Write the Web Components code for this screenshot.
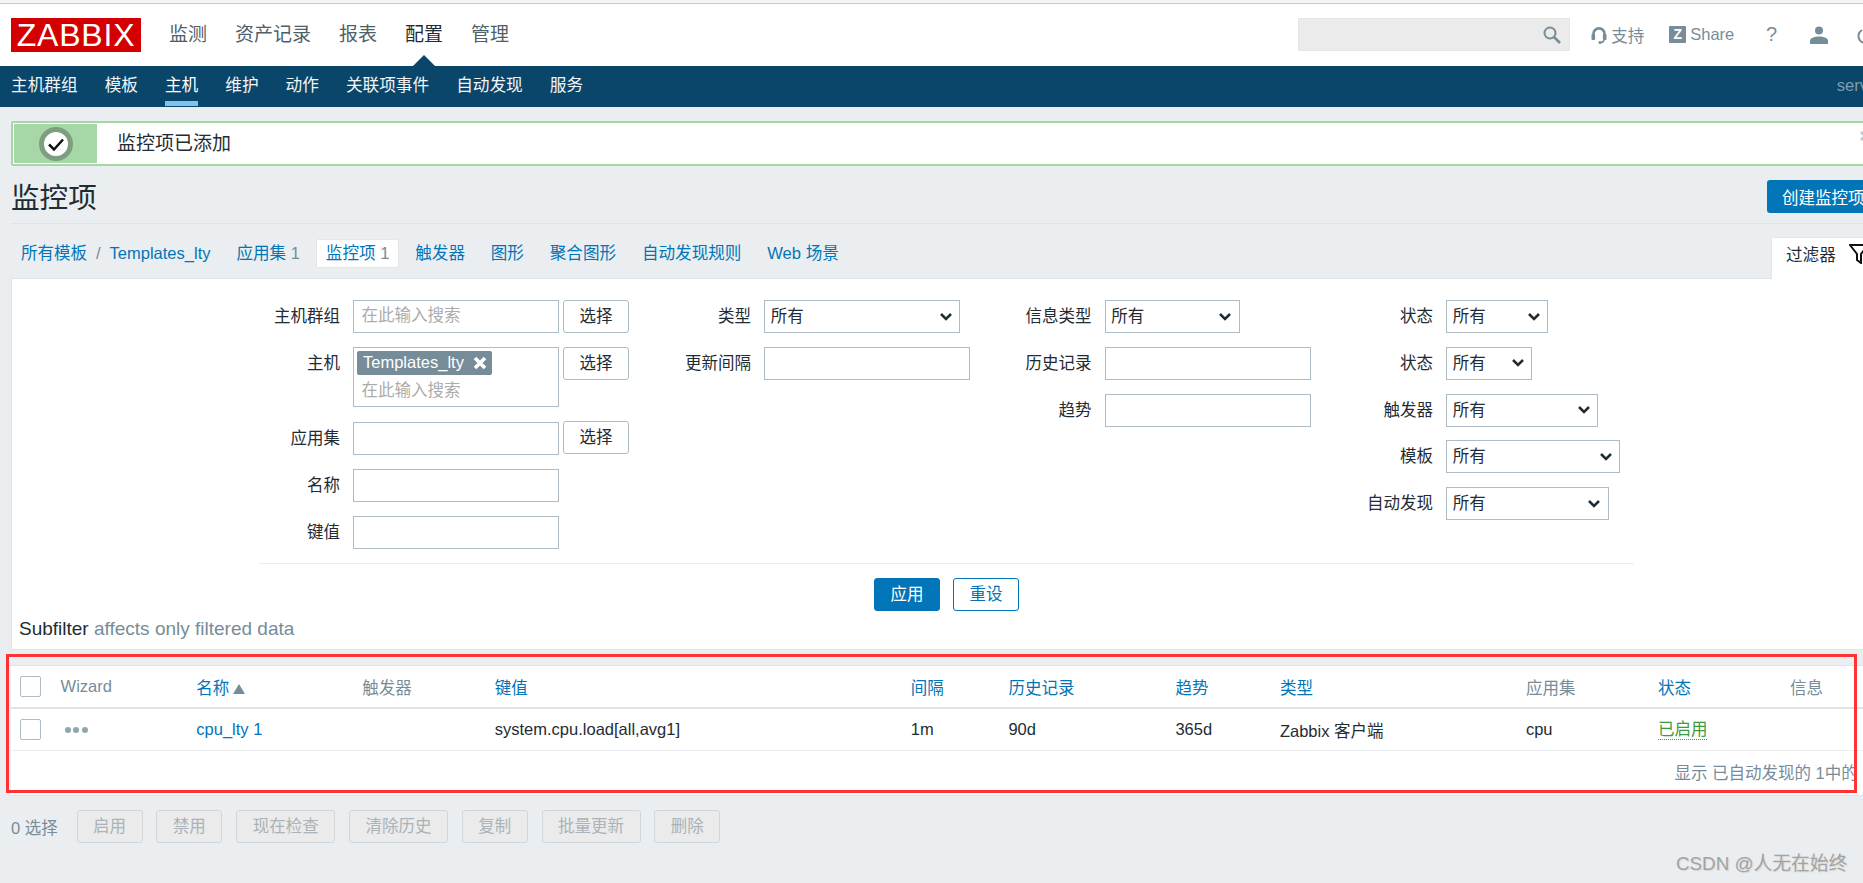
<!DOCTYPE html>
<html lang="zh">
<head>
<meta charset="utf-8">
<title>监控项</title>
<style>
  html, body { margin: 0; overflow: hidden; height: 883px; }
  body {
    background: #ebeef0;
    color: #1f2c33;
    font: 16.5px "Liberation Sans", "Noto Sans CJK SC", sans-serif;
  }
  .watermark {
    position: absolute; left: 1676px; top: 852px;
    font-size: 18.8px; line-height: 24px; color: #a3a3a3; white-space: nowrap;
    text-shadow: 1px 1px 1px #d5d5d5;
  }
</style>
</head>
<body>
<zbx-topbar></zbx-topbar>
<zbx-subnav></zbx-subnav>
<zbx-main>
  <zbx-message>监控项已添加</zbx-message>
  <zbx-title>监控项</zbx-title>
  <zbx-tabs></zbx-tabs>
  <zbx-filter></zbx-filter>
  <zbx-items></zbx-items>
  <zbx-actions></zbx-actions>
</zbx-main>
<div class="watermark">CSDN @人无在始终</div>

<script>
function open(el, html) {
  el.attachShadow({ mode: 'open' });
  const template = document.createElement('template');
  template.innerHTML = html;
  el.shadowRoot.appendChild(template.content.cloneNode(true));
}

class ZbxTopbar extends HTMLElement {
  constructor() {
    super();
    open(this, `
    <style>
      :host { display: block; width: 1874px; height: 66px; box-sizing: border-box; background: #fff; border-top: 3px solid #f4f4f4; position: relative; }
      .line { height: 1px; background: #c9c9c9; }
      .bar { display: flex; align-items: flex-start; padding: 14px 0 0 11px; }
      .logo { width: 130px; height: 34px; background: #d40000; color: #fff; font-size: 32px; line-height: 35px; text-align: center; letter-spacing: .8px; }
      nav { display: flex; gap: 28px; margin-left: 28px; font-size: 19px; line-height: 34px; color: #4f5f68; }
      nav .on { color: #1f2c33; position: relative; }
      nav .on::after { content: ''; position: absolute; left: 7.5px; top: 37px; border: 11.5px solid transparent; border-top: 0; border-bottom: 11px solid #0a466a; }
      .right { display: flex; align-items: center; margin-left: auto; height: 33px; color: #768d99; }
      .search { width: 272px; height: 33px; box-sizing: border-box; background: #ebebeb; border: 1px solid #e5e5e5; display: flex; align-items: center; justify-content: flex-end; padding-right: 8px; }
      svg { display: block; flex: none; }
      .z { width: 17px; height: 17px; background: #768d99; color: #fff; font-size: 14px; font-weight: 700; line-height: 17px; text-align: center; border-radius: 1px; }
    </style>
    <div class="line"></div>
    <div class="bar">
      <div class="logo">ZABBIX</div>
      <nav><span>监测</span><span>资产记录</span><span>报表</span><span class="on">配置</span><span>管理</span></nav>
      <div class="right">
        <div class="search">
          <svg width="18" height="18" viewBox="0 0 18 18" fill="none" stroke="#768d99" stroke-width="2"><circle cx="7" cy="7" r="5.5"/><path d="M11 11l6 6" stroke-width="2.6"/></svg>
        </div>
        <svg style="margin-left:21px" width="16" height="18" viewBox="0 0 16 18" fill="none" stroke="#768d99"><path d="M2.4 12V8a5.600 5.600 0 0 1 11.200 0v4" stroke-width="2.600"/><rect x=".5" y="8" width="3.600" height="6" rx="1" fill="#768d99" stroke="none"/><rect x="11.900" y="8" width="3.600" height="6" rx="1" fill="#768d99" stroke="none"/><path d="M13 13.500c0 2-1 2.800-3 3" stroke-width="1.600"/><circle cx="9" cy="16.500" r="1.500" fill="#768d99" stroke="none"/></svg>
        <span style="margin-left:4px">支持</span>
        <span class="z" style="margin-left:25px">Z</span>
        <span style="margin-left:4px">Share</span>
        <span style="margin-left:31.600px;font-size:20px">?</span>
        <svg style="margin-left:33px" width="18" height="18" viewBox="0 0 18 18" fill="#768d99"><circle cx="9" cy="4.500" r="4"/><path d="M0 18v-3c0-3 4-4.500 9-4.500s9 1.500 9 4.500v3z"/></svg>
        <svg style="margin-left:29px" width="17" height="18" viewBox="0 0 17 18" fill="none" stroke="#768d99" stroke-width="2"><path d="M5 4a7 7 0 1 0 7 0"/><path d="M8.500 1v7"/></svg>
      </div>
    </div>`);
  }
}

class ZbxSubnav extends HTMLElement {
  constructor() {
    super();
    open(this, `
    <style>
      :host { display: flex; gap: 27px; box-sizing: border-box; width: 1883px; height: 41px; padding-left: 11px; background: #0a466a; color: #f2f5f7; font-size: 16.660px; }
      span { box-sizing: border-box; height: 40px; padding-top: 5px; line-height: 30px; border-bottom: 5px solid transparent; }
      .on { border-bottom-color: #7fc2ee; color: #fff; }
      .server { margin-left: auto; color: #7f9cae; }
    </style>
    <span>主机群组</span><span>模板</span><span class="on">主机</span><span>维护</span><span>动作</span><span>关联项事件</span><span>自动发现</span><span>服务</span>
    <span class="server">server</span>`);
  }
}

class ZbxMain extends HTMLElement {
  constructor() {
    super();
    open(this, `
    <style>:host { display: block; width: 1872px; margin-left: 11px; }</style>
    <slot></slot>`);
  }
}

class ZbxMessage extends HTMLElement {
  constructor() {
    super();
    open(this, `
    <style>
      :host { display: flex; align-items: stretch; box-sizing: border-box; height: 45px; margin-top: 14px; background: #fff; border: 2px solid #a7d7a7; border-radius: 2px; padding: 1px; font-size: 19px; }
      .mark { width: 83px; background: #a7d7a7; display: flex; align-items: center; justify-content: center; }
      .text { line-height: 39px; margin-left: 20px; }
      .close { margin-left: auto; margin-right: 10px; margin-top: 7px; }
    </style>
    <div class="mark">
      <svg width="34" height="34" viewBox="0 0 34 34"><circle cx="17" cy="17" r="14.500" fill="#fff" stroke="#7d9f7f" stroke-width="5"/><path d="M10 17.500l5 5 9-10" fill="none" stroke="#111" stroke-width="2.500"/></svg>
    </div>
    <div class="text"><slot></slot></div>
    <svg class="close" width="10" height="10" viewBox="0 0 10 10" stroke="#b9c5cc" stroke-width="2.500"><path d="M1 1l8 8M9 1l-8 8"/></svg>`);
  }
}

class ZbxTitle extends HTMLElement {
  constructor() {
    super();
    open(this, `
    <style>
      :host { display: flex; justify-content: space-between; padding: 14px 0 10px; border-bottom: 1px solid #dfe4e7; height: 33px; }
      h1 { margin: 1.500px 0 0; font-size: 28.600px; font-weight: 400; line-height: 33px; }
      button { font: inherit; width: 116px; height: 33px; background: #0275b8; color: #fff; border: 0; border-radius: 3px; padding: 0 0 0 15px; text-align: left; white-space: nowrap; }
    </style>
    <h1><slot></slot></h1>
    <button>创建监控项</button>`);
  }
}

class ZbxTabs extends HTMLElement {
  constructor() {
    super();
    open(this, `
    <style>
      :host { display: flex; gap: 7px; height: 54px; color: #0275b8; font-size: 16.600px; }
      .crumbs { display: flex; gap: 9px; margin: 15px 9.500px 0 10px; line-height: 29px; font-size: 16.500px; }
      .crumbs i { font-style: normal; color: #768d99; }
      a { margin-top: 15px; height: 29px; line-height: 29px; padding: 0 9.400px; box-sizing: border-box; white-space: nowrap; }
      a b { font-weight: 400; color: #768d99; }
      .on { background: #fff; border: 1px solid #e3e7ea; border-radius: 2px; padding: 0 8.400px; line-height: 27px; }
      .filter { position: relative; z-index: 1; margin-left: auto; margin-top: 13px; width: 112px; height: 42px; box-sizing: border-box; background: #fff; padding: 0 0 10px 14px; color: #1f2c33; display: flex; align-items: center; gap: 13px; border: 1px solid #e3e7ea; border-bottom: 0; border-radius: 2px 2px 0 0; }
      svg { flex: none; }
    </style>
    <div class="crumbs"><span>所有模板</span><i>/</i><span>Templates_lty</span></div>
    <a>应用集 <b>1</b></a>
    <a class="on">监控项 <b>1</b></a>
    <a>触发器</a><a>图形</a><a>聚合图形</a><a>自动发现规则</a><a>Web 场景</a>
    <div class="filter">过滤器
      <svg width="20" height="20" viewBox="0 0 20 20" fill="none" stroke="#111" stroke-width="2"><path d="M1 1h18l-7 9v9l-4-3v-6z"/></svg>
    </div>`);
  }
}

class ZbxField extends HTMLElement {
  constructor() {
    super();
    open(this, `
    <style>
      :host { display: flex; align-items: flex-start; gap: 13px; }
      label { width: 81px; flex: none; text-align: right; line-height: 33px; white-space: nowrap; }
      div { display: flex; align-items: flex-start; gap: 4px; }
    </style>
    <label></label><div><slot></slot></div>`);
    this.shadowRoot.querySelector('label').textContent = this.getAttribute('label');
  }
}

class ZbxInput extends HTMLElement {
  constructor() {
    super();
    open(this, `
    <style>
      :host { display: block; box-sizing: border-box; width: 206px; height: 33px; background: #fff; border: 1px solid #acbbc4; padding-left: 7.400px; line-height: 29px; color: #acacac; white-space: nowrap; }
    </style>
    <slot></slot>`);
  }
}

class ZbxMulti extends HTMLElement {
  constructor() {
    super();
    open(this, `
    <style>
      :host { display: block; box-sizing: border-box; width: 206px; height: 60px; margin-bottom: 1.500px; background: #fff; border: 1px solid #acbbc4; padding: 3px; }
      .tag { display: inline-flex; align-items: center; height: 24px; width: 135px; box-sizing: border-box; padding-left: 6px; background: #768d99; color: #fff; border-radius: 2px; white-space: nowrap; }
      svg { margin-left: 9px; flex: none; }
      .hint { margin: 3px 0 0 4.400px; line-height: 24px; color: #acacac; }
    </style>
    <div class="tag"><slot></slot><svg width="14" height="14" viewBox="0 0 14 14" stroke="#fff" stroke-width="3.600"><path d="M2 2l10 10M12 2l-10 10"/></svg></div>
    <div class="hint">在此输入搜索</div>`);
  }
}

class ZbxSelect extends HTMLElement {
  constructor() {
    super();
    open(this, `
    <style>
      :host { display: flex; align-items: center; justify-content: space-between; box-sizing: border-box; height: 33px; background: #fff; border: 1px solid #acbbc4; padding: 0 7.500px 0 5.700px; line-height: 29px; }
    </style>
    <span>所有</span>
    <svg width="12" height="8" viewBox="0 0 12 8" fill="none" stroke="#1f2c33" stroke-width="2.500"><path d="M1 1l5 5 5-5"/></svg>`);
    this.style.width = this.getAttribute('width') + 'px';
  }
}

class ZbxButton extends HTMLElement {
  constructor() {
    super();
    open(this, `
    <style>
      :host { display: block; box-sizing: border-box; height: 33px; padding: 0 15.500px; line-height: 31px; text-align: center; white-space: nowrap; background: #fff; border: 1px solid #acbbc4; border-radius: 3px; }
      :host([kind=main]) { background: #0275b8; border-color: #0275b8; color: #fff; }
      :host([kind=alt]) { border-color: #0275b8; color: #0275b8; }
      :host([disabled]) { background: #ebebeb; border-color: #d0d7db; color: #a9b3b9; }
    </style>
    <slot></slot>`);
  }
}

class ZbxFilter extends HTMLElement {
  constructor() {
    super();
    open(this, `
    <style>
      :host { display: block; box-sizing: border-box; height: 372px; background: #fff; border: 1px solid #dfe4e7; padding-top: 21px; }
      .form { width: 1375px; margin-left: 247px; border-bottom: 1px solid #ebeef0; padding-bottom: 14px; display: grid; grid-template-columns: 411px 340.500px 341.500px 282px; }
      .col { display: flex; flex-direction: column; gap: 13.750px; }
      .btns { width: 1375px; margin: 14px 0 0 247px; display: flex; justify-content: center; gap: 13px; }
      .sub { margin: 8px 0 0 7px; font-size: 19px; line-height: 20px; color: #768d99; }
      .sub b { font-weight: 400; color: #1f2c33; }
      .up { margin-top: -1px; }
    </style>
    <div class="form">
      <div class="col">
        <zbx-field label="主机群组"><zbx-input>在此输入搜索</zbx-input><zbx-button>选择</zbx-button></zbx-field>
        <zbx-field label="主机"><zbx-multi>Templates_lty</zbx-multi><zbx-button>选择</zbx-button></zbx-field>
        <zbx-field label="应用集"><zbx-input></zbx-input><zbx-button class="up">选择</zbx-button></zbx-field>
        <zbx-field label="名称"><zbx-input></zbx-input></zbx-field>
        <zbx-field label="键值"><zbx-input></zbx-input></zbx-field>
      </div>
      <div class="col">
        <zbx-field label="类型"><zbx-select width="196"></zbx-select></zbx-field>
        <zbx-field label="更新间隔"><zbx-input></zbx-input></zbx-field>
      </div>
      <div class="col">
        <zbx-field label="信息类型"><zbx-select width="135"></zbx-select></zbx-field>
        <zbx-field label="历史记录"><zbx-input></zbx-input></zbx-field>
        <zbx-field label="趋势"><zbx-input></zbx-input></zbx-field>
      </div>
      <div class="col">
        <zbx-field label="状态"><zbx-select width="102"></zbx-select></zbx-field>
        <zbx-field label="状态"><zbx-select width="86"></zbx-select></zbx-field>
        <zbx-field label="触发器"><zbx-select width="152"></zbx-select></zbx-field>
        <zbx-field label="模板"><zbx-select width="174"></zbx-select></zbx-field>
        <zbx-field label="自动发现"><zbx-select width="162.500"></zbx-select></zbx-field>
      </div>
    </div>
    <div class="btns"><zbx-button kind="main">应用</zbx-button><zbx-button kind="alt">重设</zbx-button></div>
    <div class="sub"><b>Subfilter</b> affects only filtered data</div>`);
  }
}

class ZbxItems extends HTMLElement {
  constructor() {
    super();
    open(this, `
    <style>
      :host { display: block; position: relative; height: 131px; box-sizing: border-box; margin-top: 15px; background: #fff; border-top: 1px solid #dfe4e7; border-bottom: 1px solid #dfe4e7; }
      .row { display: grid; grid-template-columns: 41px 135.700px 166px 132.500px 416px 97.600px 167px 104.500px 246px 132px 132px 70px; align-items: center; height: 41px; padding-left: 8.600px; white-space: nowrap; }
      .head { border-bottom: 2px solid #dfe4e7; color: #768d99; }
      .body { border-bottom: 1px solid #ebeef0; }
      .check { width: 21px; height: 21px; box-sizing: border-box; background: #fff; border: 1px solid #acbbc4; border-radius: 2px; }
      a { color: #0275b8; }
      .sort::after { content: ''; display: inline-block; margin-left: 4px; border: 6px solid transparent; border-top: 0; border-bottom: 10px solid #768d99; }
      .dots { display: flex; gap: 2.500px; margin-left: 4px; }
      .dots i { width: 6px; height: 6px; border-radius: 50%; background: #93a5af; }
      .on { color: #3d9b3d; border-bottom: 1px dotted #3d9b3d; line-height: 19px; justify-self: start; }
      .foot { text-align: right; padding-right: 11.500px; line-height: 44px; color: #768d99; white-space: nowrap; }
      .mark { position: absolute; left: -5px; top: -12px; width: 1851px; height: 139px; box-sizing: border-box; border: 3.500px solid #f33; }
    </style>
    <div class="row head">
      <span class="check"></span><span>Wizard</span><a class="sort">名称</a><span>触发器</span><a>键值</a><a>间隔</a><a>历史记录</a><a>趋势</a><a>类型</a><span>应用集</span><a>状态</a><span>信息</span>
    </div>
    <div class="row body">
      <span class="check"></span><span class="dots"><i></i><i></i><i></i></span><a>cpu_lty 1</a><span></span><span>system.cpu.load[all,avg1]</span><span>1m</span><span>90d</span><span>365d</span><span>Zabbix 客户端</span><span>cpu</span><span class="on">已启用</span><span></span>
    </div>
    <div class="foot">显示 已自动发现的 1中的 1</div>
    <div class="mark"></div>`);
  }
}

class ZbxActions extends HTMLElement {
  constructor() {
    super();
    open(this, `
    <style>
      :host { display: flex; align-items: center; gap: 13.800px; margin-top: 14px; height: 33px; color: #768d99; }
      span { margin-right: 5px; }
    </style>
    <span>0 选择</span>
    <zbx-button disabled>启用</zbx-button>
    <zbx-button disabled>禁用</zbx-button>
    <zbx-button disabled>现在检查</zbx-button>
    <zbx-button disabled>清除历史</zbx-button>
    <zbx-button disabled>复制</zbx-button>
    <zbx-button disabled>批量更新</zbx-button>
    <zbx-button disabled>删除</zbx-button>`);
  }
}

customElements.define('zbx-field', ZbxField);
customElements.define('zbx-input', ZbxInput);
customElements.define('zbx-multi', ZbxMulti);
customElements.define('zbx-select', ZbxSelect);
customElements.define('zbx-button', ZbxButton);
customElements.define('zbx-topbar', ZbxTopbar);
customElements.define('zbx-subnav', ZbxSubnav);
customElements.define('zbx-main', ZbxMain);
customElements.define('zbx-message', ZbxMessage);
customElements.define('zbx-title', ZbxTitle);
customElements.define('zbx-tabs', ZbxTabs);
customElements.define('zbx-filter', ZbxFilter);
customElements.define('zbx-items', ZbxItems);
customElements.define('zbx-actions', ZbxActions);
</script>
</body>
</html>
